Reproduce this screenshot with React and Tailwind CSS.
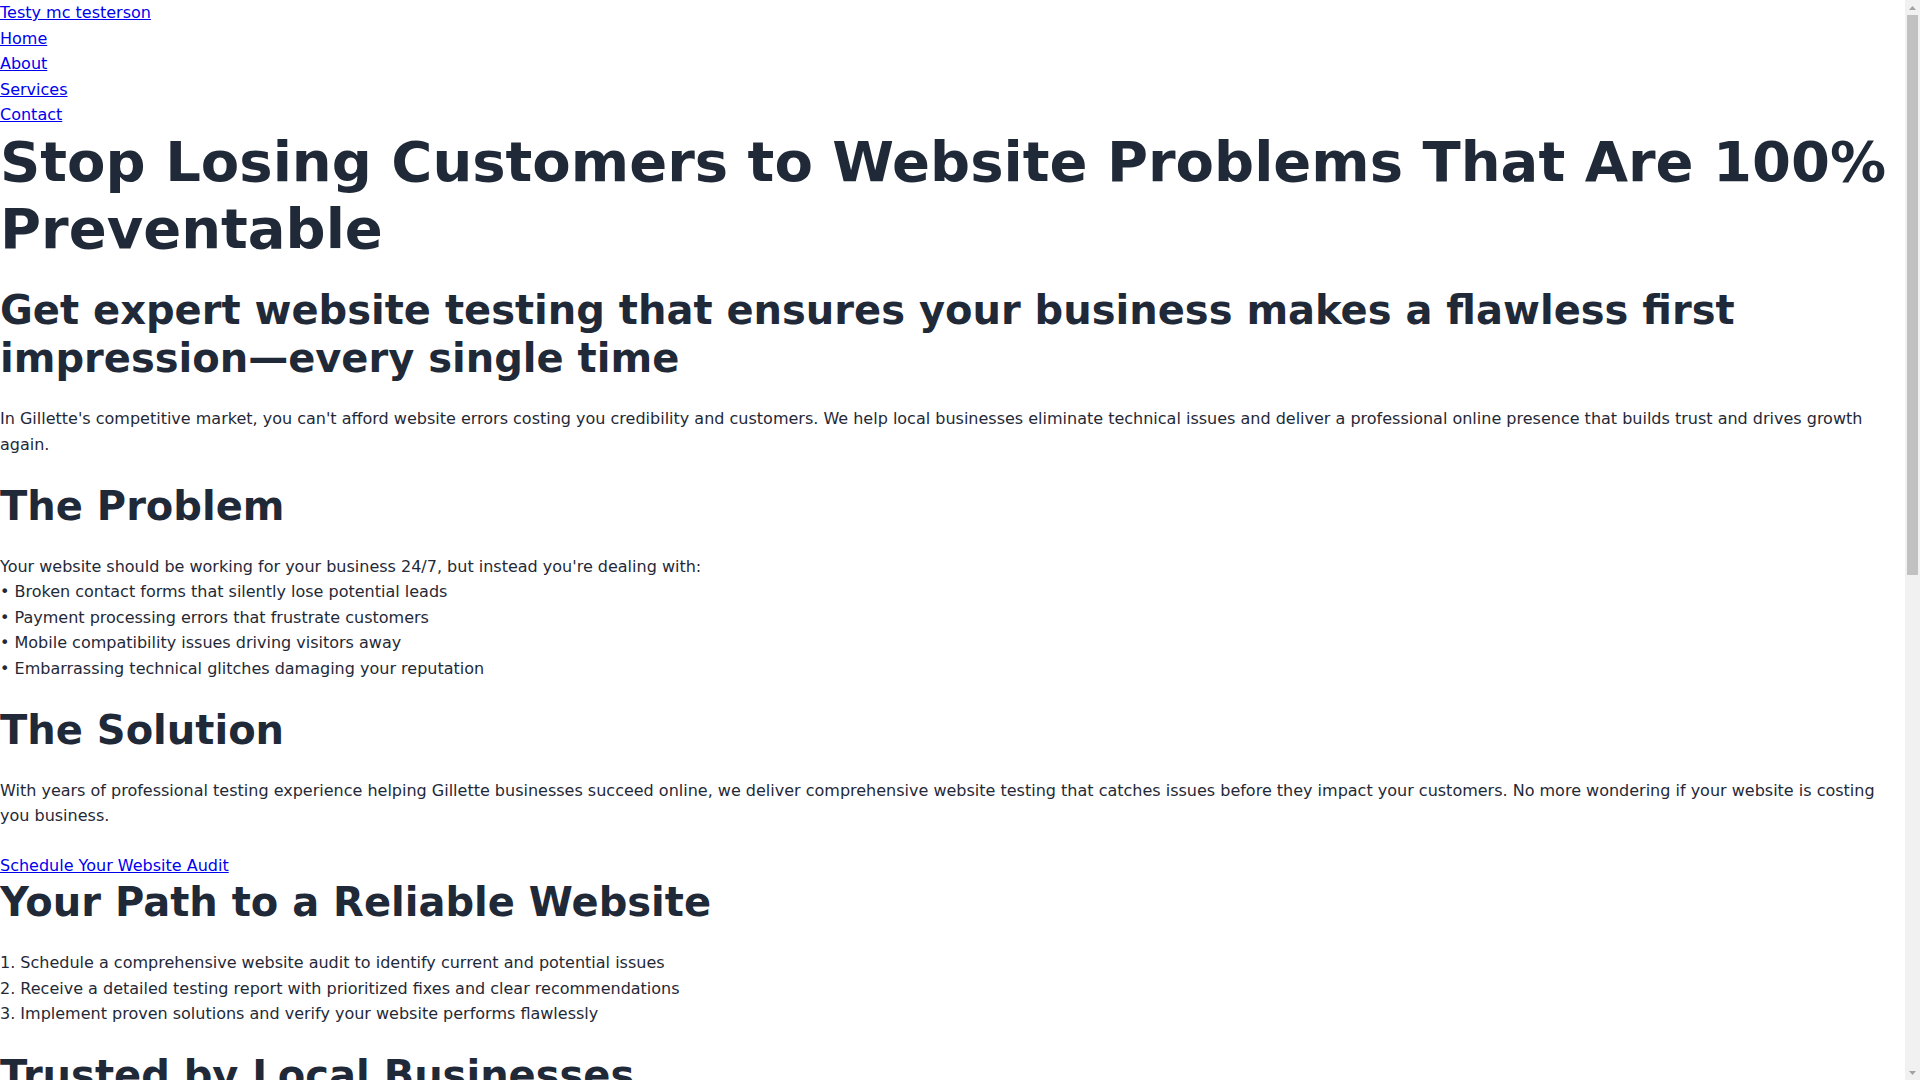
import React from "react";

const H2 = ({ children, className = "" }) => (
  <h2 className={"text-[40px] leading-[1.2] font-bold text-[#1f2937] mb-6 " + className}>{children}</h2>
);

const P = ({ children, className = "" }) => (
  <p className={"text-base leading-[1.6] text-[#1f2937] mb-6 " + className}>{children}</p>
);

function Scrollbar() {
  return (
    <div className="fixed top-0 right-0 w-[15px] h-screen bg-[#f1f1f1] flex flex-col items-center">
      <div className="h-[15px] w-full flex items-center justify-center">
        <svg width="7" height="4" viewBox="0 0 7 4"><polygon points="0,4 3.5,0 7,4" fill="#a3a3a3" /></svg>
      </div>
      <div className="w-[11px] h-[560px] bg-[#c1c1c1]" />
      <div className="flex-1" />
      <div className="h-[15px] w-full flex items-center justify-center">
        <svg width="7" height="4" viewBox="0 0 7 4"><polygon points="0,0 3.5,4 7,0" fill="#a3a3a3" /></svg>
      </div>
    </div>
  );
}

export default function App() {
  return (
    <div className="bg-white min-h-screen text-[#1f2937]" style={{ fontFamily: '"DejaVu Sans", "Liberation Sans", sans-serif' }}>
      <div className="w-[1905px]">
        <nav className="text-base leading-[1.6]">
          <a href="#" className="block text-[#0000ee] underline w-fit">Testy mc testerson</a>
          <a href="#" className="block text-[#0000ee] underline w-fit">Home</a>
          <a href="#" className="block text-[#0000ee] underline w-fit">About</a>
          <a href="#" className="block text-[#0000ee] underline w-fit">Services</a>
          <a href="#" className="block text-[#0000ee] underline w-fit">Contact</a>
        </nav>
        <h1 className="text-[56px] leading-[1.2] font-bold text-[#1f2937] mb-6">
          Stop Losing Customers to Website Problems That Are 100% Preventable
        </h1>
        <H2>Get expert website testing that ensures your business makes a flawless first impression—every single time</H2>
        <P>
          In Gillette's competitive market, you can't afford website errors costing you credibility and customers. We help local businesses eliminate technical issues and deliver a professional online presence that builds trust and drives growth again.
        </P>
        <H2>The Problem</H2>
        <P>
          Your website should be working for your business 24/7, but instead you're dealing with:<br />
          • Broken contact forms that silently lose potential leads<br />
          • Payment processing errors that frustrate customers<br />
          • Mobile compatibility issues driving visitors away<br />
          • Embarrassing technical glitches damaging your reputation
        </P>
        <H2>The Solution</H2>
        <P>
          With years of professional testing experience helping Gillette businesses succeed online, we deliver comprehensive website testing that catches issues before they impact your customers. No more wondering if your website is costing you business.
        </P>
        <a href="#" className="block w-fit text-base leading-[1.6] text-[#0000ee] underline">Schedule Your Website Audit</a>
        <H2>Your Path to a Reliable Website</H2>
        <P className="mb-4">
          1. Schedule a comprehensive website audit to identify current and potential issues<br />
          2. Receive a detailed testing report with prioritized fixes and clear recommendations<br />
          3. Implement proven solutions and verify your website performs flawlessly
        </P>
        <H2>Trusted by Local Businesses</H2>
        <P>
          "Our contact form had been broken for months and we had no idea. Testy found it in the first audit and we started getting leads again within a week."<br />
          — Local Business Owner, Gillette, WY
        </P>
        <P>
          "The detailed report made it easy for our developer to fix everything. Our checkout works flawlessly on every device now."<br />
          — Retail Shop Owner, Gillette, WY
        </P>
        <H2>What You Get</H2>
        <P>
          • Complete functionality testing of forms, links and checkout<br />
          • Cross-browser and mobile device compatibility checks<br />
          • Performance and load time analysis<br />
          • A clear, prioritized action plan
        </P>
        <H2>Ready to Stop Losing Customers?</H2>
        <P>
          Don't let preventable website problems cost you another customer. Schedule your website audit today and get the peace of mind that comes with a website that works.
        </P>
        <a href="#" className="block w-fit text-base leading-[1.6] text-[#0000ee] underline">Schedule Your Website Audit</a>
        <footer className="mt-6 pb-6">
          <P className="mb-0">© 2025 Testy mc testerson. All rights reserved.</P>
        </footer>
      </div>
      <Scrollbar />
    </div>
  );
}
